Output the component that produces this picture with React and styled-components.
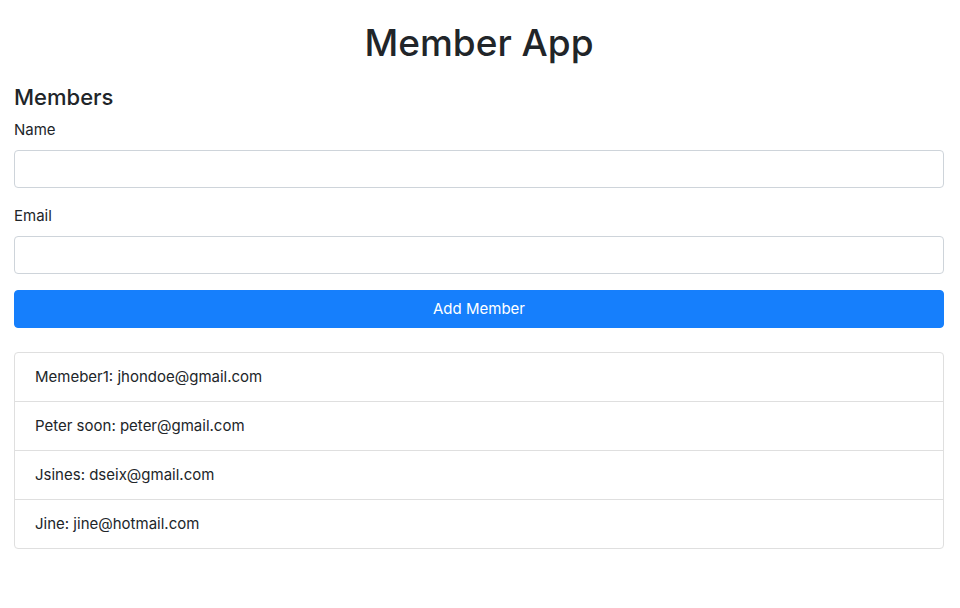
import React, { useState } from "react";
import styled, { createGlobalStyle } from "styled-components";

const GlobalStyle = createGlobalStyle`
  *, *::before, *::after {
    box-sizing: border-box;
  }
  body {
    margin: 0;
    background: #fff;
    color: #212529;
    font-family: Inter, "Liberation Sans", sans-serif;
    font-size: 15px;
    line-height: 24px;
  }
`;

const Page = styled.main`
  padding: 19px 16px 24px 14px;
`;

const Title = styled.h1`
  margin: 0 0 16px;
  font-size: 37px;
  font-weight: 500;
  line-height: 48px;
  text-align: center;
`;

const SectionTitle = styled.h2`
  margin: 0 0 7px;
  font-size: 22px;
  font-weight: 500;
  line-height: 28px;
`;

const Form = styled.form`
  display: flex;
  flex-direction: column;
  gap: 16px;
  margin: 0 0 24px;
`;

const Field = styled.div`
  display: flex;
  flex-direction: column;
  gap: 8px;
`;

const Label = styled.label`
  align-self: flex-start;
`;

const TextInput = styled.input`
  width: 100%;
  height: 38px;
  padding: 6px 12px;
  border: 1px solid #ced4da;
  border-radius: 4px;
  background: #fff;
  color: #495057;
  font: inherit;
`;

const SubmitButton = styled.button`
  height: 38px;
  padding: 6px 12px;
  border: 1px solid #167ffc;
  border-radius: 4px;
  background: #167ffc;
  color: #fff;
  font: inherit;
  cursor: pointer;
`;

const MemberList = styled.ul`
  margin: 0;
  padding: 0;
  list-style: none;
  border: 1px solid #dfdfdf;
  border-radius: 4px;
`;

const MemberItem = styled.li`
  padding: 12px 20px;

  & + & {
    border-top: 1px solid #dfdfdf;
  }
`;

const initialMembers = [
  { name: "Memeber1", email: "jhondoe@gmail.com" },
  { name: "Peter soon", email: "peter@gmail.com" },
  { name: "Jsines", email: "dseix@gmail.com" },
  { name: "Jine", email: "jine@hotmail.com" },
];

export default function App() {
  const [members, setMembers] = useState(initialMembers);
  const [name, setName] = useState("");
  const [email, setEmail] = useState("");

  const addMember = (event) => {
    event.preventDefault();
    if (!name || !email) return;
    setMembers([...members, { name, email }]);
    setName("");
    setEmail("");
  };

  return (
    <>
      <GlobalStyle />
      <Page>
        <Title>Member App</Title>
        <SectionTitle>Members</SectionTitle>
        <Form onSubmit={addMember}>
          <Field>
            <Label htmlFor="name">Name</Label>
            <TextInput id="name" value={name} onChange={(e) => setName(e.target.value)} />
          </Field>
          <Field>
            <Label htmlFor="email">Email</Label>
            <TextInput id="email" type="email" value={email} onChange={(e) => setEmail(e.target.value)} />
          </Field>
          <SubmitButton type="submit">Add Member</SubmitButton>
        </Form>
        <MemberList>
          {members.map((member, index) => (
            <MemberItem key={index}>
              {member.name}: {member.email}
            </MemberItem>
          ))}
        </MemberList>
      </Page>
    </>
  );
}
